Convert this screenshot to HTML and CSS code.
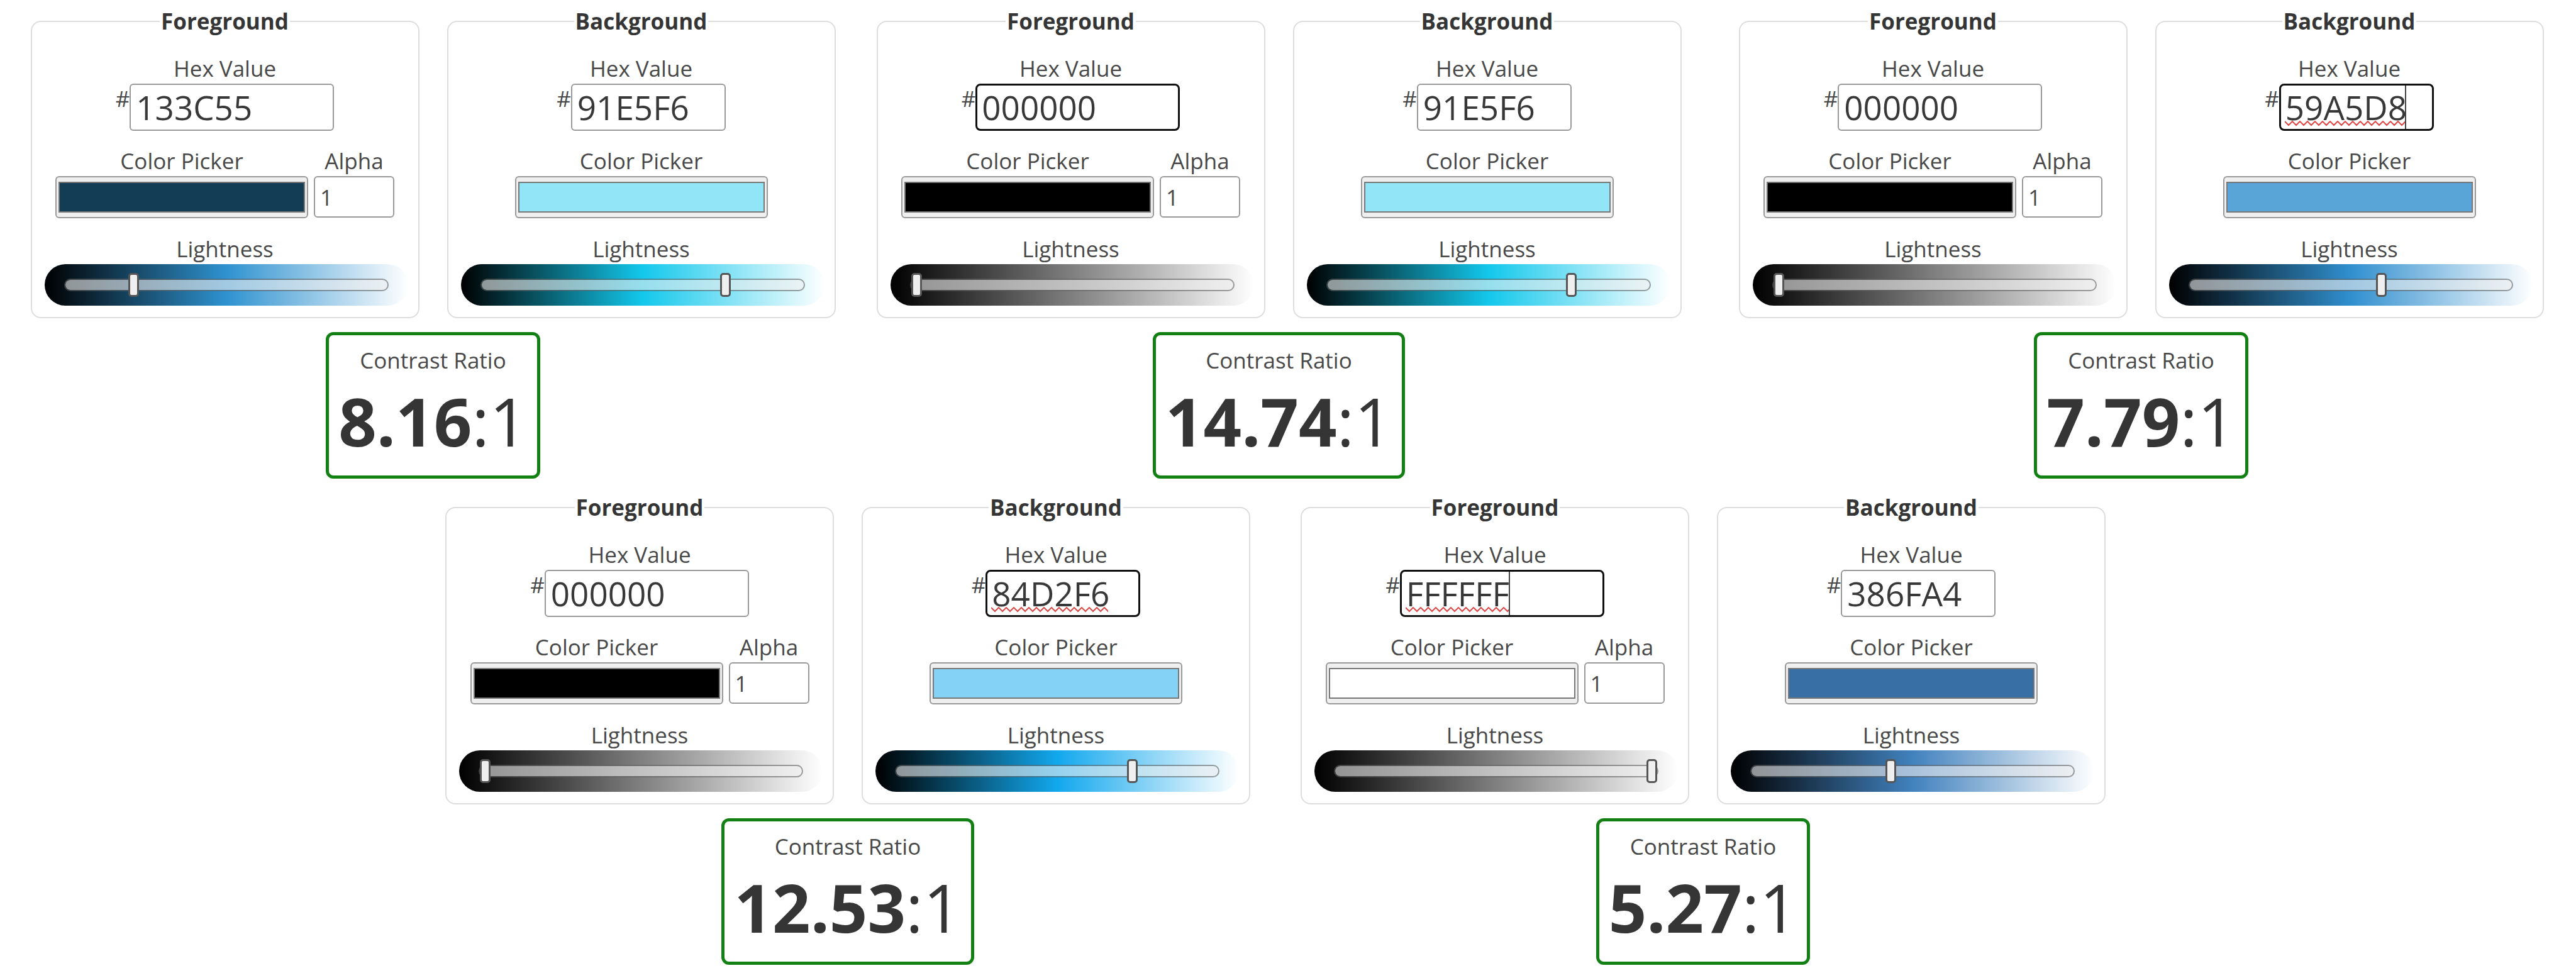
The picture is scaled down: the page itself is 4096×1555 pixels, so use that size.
FILE: index.html
```html
<!DOCTYPE html>
<html lang="en">
<head>
<meta charset="utf-8">
<title>Contrast Checker Results</title>
<link rel="stylesheet" href="styles.css">
</head>
<body>
<main class="board" id="board"></main>
<script src="board.js"></script>
</body>
</html>
```

FILE: styles.css
```css
* { box-sizing: border-box; }

body {
  margin: 0;
  background: #fff;
  color: #353535;
  font: 35px/48px "Open Sans", "Noto Sans", sans-serif;
}

.board {
  display: flex;
  flex-direction: column;
  gap: 22px;
  padding-top: 10px;
}

.row {
  display: flex;
  justify-content: center;
  gap: 65px;
  padding-right: 3px;
}

.row-second {
  gap: 80px;
  padding-right: 40px;
}

.checker {
  flex: none;
  width: 31.25vw;
  display: flex;
  flex-direction: column;
  align-items: center;
  gap: 22px;
}

.checker-spaced { margin-left: 26px; }

.panels {
  align-self: stretch;
  display: flex;
  gap: 44px;
}

.panel {
  flex: 1;
  min-width: 0;
  margin: 0;
  padding: 27px 18px 18px;
  border: 2px solid #ddd;
  border-radius: 16px;
  display: flex;
  flex-direction: column;
  align-items: stretch;
  text-align: center;
}

.panel legend {
  margin: 0 auto;
  padding: 0 2px;
  font-weight: 700;
}

label { color: #484848; }

.group {
  display: flex;
  flex-direction: column;
  align-items: center;
}

.hex-row { display: flex; }
.hash { color: #484848; }

.field { position: relative; display: flex; }

.hex, .alpha, .picker {
  display: block;
  margin: 0;
  border: 2px solid #999;
  border-radius: 6px;
  background: #fff;
  color: #383838;
  font-family: inherit;
}

.hex {
  width: 325px;
  height: 75px;
  padding: 0 8px;
  font-size: 53px;
}

.hex-short { width: 246px; }

.hex-active {
  border: 3px solid #101010;
  border-radius: 8px;
  padding: 0 7px;
  outline: none;
}

.squiggle {
  position: absolute;
  left: 9px;
  top: 59px;
  height: 9px;
}

.caret {
  position: absolute;
  top: 3px;
  bottom: 3px;
  width: 2px;
  background: #444;
}

.pickers {
  display: flex;
  justify-content: center;
  gap: 9px;
  padding: 24px 0 25px;
}

.picker {
  width: 402px;
  height: 67px;
  padding: 0;
  background: #efefef;
}

.picker::-webkit-color-swatch-wrapper { padding: 7px 3px; }
.picker::-webkit-color-swatch { border: 2px solid #777; border-radius: 0; }

.alpha {
  width: 128px;
  height: 66px;
  padding: 0 8px;
  font-size: 35px;
  color: #484848;
}

.slider {
  -webkit-appearance: none;
  appearance: none;
  display: block;
  width: 100%;
  height: 66px;
  margin: 0 0 0 2px;
  padding: 0 31px;
  border-radius: 33px;
}

.slider::-webkit-slider-runnable-track {
  height: 20px;
  border: 2px solid rgba(95, 95, 95, 0.6);
  border-radius: 10px;
  background: rgba(239, 239, 239, 0.6) padding-box;
}

.slider::-webkit-slider-thumb {
  -webkit-appearance: none;
  width: 17px;
  height: 38px;
  margin: -11px 0 0;
  border: 3px solid #555;
  border-radius: 5px;
  background: #efefef;
}

.ratio {
  padding: 16px 15px 14px;
  border: 5px solid #128012;
  border-radius: 12px;
  text-align: center;
}

.ratio-label { margin: 0; color: #484848; }

.ratio-value {
  margin: 0;
  font-size: 106px;
  line-height: 145px;
}
```

FILE: board.js
```js
const rows = [
  [
    { ratio: "8.16",
      fg: { hex: "133C55", light: 20.4, mid: "hsl(203 63% 50%)" },
      bg: { hex: "91E5F6", light: 76.7, mid: "hsl(190 85% 50%)" } },
    { ratio: "14.74",
      fg: { hex: "000000", light: 0, mid: "hsl(0 0% 50%)", active: true },
      bg: { hex: "91E5F6", light: 76.7, mid: "hsl(190 85% 50%)" } },
    { ratio: "7.79", spaced: true,
      fg: { hex: "000000", light: 0, mid: "hsl(0 0% 50%)" },
      bg: { hex: "59A5D8", light: 59.8, mid: "hsl(204 62% 50%)", active: true, misspelt: 191, caret: true } },
  ],
  [
    { ratio: "12.53",
      fg: { hex: "000000", light: 0, mid: "hsl(0 0% 50%)" },
      bg: { hex: "84D2F6", light: 74.1, mid: "hsl(199 86% 50%)", active: true, misspelt: 186 } },
    { ratio: "5.27",
      fg: { hex: "FFFFFF", light: 100, mid: "hsl(0 0% 50%)", active: true, misspelt: 164, caret: true },
      bg: { hex: "386FA4", light: 43.1, mid: "hsl(209 49% 50%)" } },
  ],
];

function squiggle(width) {
  let d = "M0 1";
  for (let x = 0; x < width; x += 12) d += " l6 6 l6 -6";
  return `<svg class="squiggle" width="${width}" height="9" aria-hidden="true">
    <path d="${d}" fill="none" stroke="#e04848" stroke-width="2"/></svg>`;
}

function panel(id, title, c, isForeground) {
  const hexClass = ["hex", isForeground ? "" : "hex-short", c.active ? "hex-active" : ""].join(" ").trim();
  const alpha = isForeground
    ? `<div class="group"><label for="${id}-alpha">Alpha</label>
       <input class="alpha" id="${id}-alpha" type="text" value="1"></div>`
    : "";
  return `<fieldset class="panel">
    <legend>${title}</legend>
    <div class="group">
      <label for="${id}-hex">Hex Value</label>
      <div class="hex-row">
        <span class="hash">#</span>
        <div class="field">
          <input class="${hexClass}" id="${id}-hex" type="text" spellcheck="false" value="${c.hex}">
          ${c.misspelt ? squiggle(c.misspelt) : ""}
          ${c.caret ? `<span class="caret" style="left:${c.misspelt + 9}px"></span>` : ""}
        </div>
      </div>
    </div>
    <div class="pickers">
      <div class="group"><label for="${id}-color">Color Picker</label>
        <input class="picker" id="${id}-color" type="color" value="#${c.hex.toLowerCase()}"></div>
      ${alpha}
    </div>
    <label for="${id}-light">Lightness</label>
    <input class="slider" id="${id}-light" type="range" min="0" max="100" step="0.1" value="${c.light}"
      style="background:linear-gradient(to right, #000, ${c.mid}, #fff)">
  </fieldset>`;
}

document.getElementById("board").innerHTML = rows.map((row, r) => `
  <div class="row ${r ? "row-second" : ""}">
    ${row.map((item, i) => `
    <section class="checker ${item.spaced ? "checker-spaced" : ""}">
      <div class="panels">
        ${panel(`r${r}c${i}-fg`, "Foreground", item.fg, true)}
        ${panel(`r${r}c${i}-bg`, "Background", item.bg, false)}
      </div>
      <div class="ratio">
        <p class="ratio-label">Contrast Ratio</p>
        <p class="ratio-value"><b>${item.ratio}</b>:1</p>
      </div>
    </section>`).join("")}
  </div>`).join("");
```
